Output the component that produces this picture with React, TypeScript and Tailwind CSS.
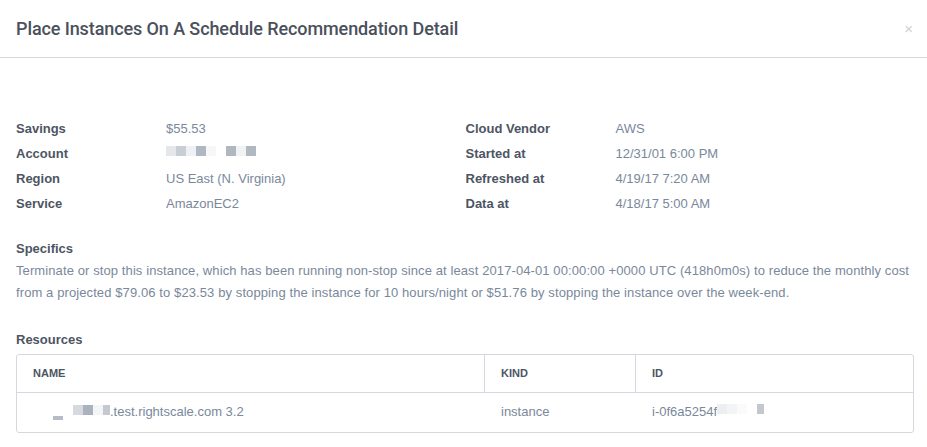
import React from 'react';

const font = { fontFamily: '"Liberation Sans", Arial, sans-serif' };

const Pixels: React.FC<{ colors: string[]; className?: string }> = ({ colors, className }) => (
  <div className={'flex ' + (className ?? '')}>
    {colors.map((c, i) => (
      <div key={i} className="h-[10px] w-[10px]" style={{ backgroundColor: c }} />
    ))}
  </div>
);

const Row: React.FC<{ label: string; children: React.ReactNode }> = ({ label, children }) => (
  <div className="flex h-[25px] items-center">
    <div className="w-[150px] text-[13px] font-bold text-[#4d5563]">{label}</div>
    <div className="text-[13px] text-[#7a889b]">{children}</div>
  </div>
);

export default function App() {
  return (
    <div className="h-[447px] w-[927px] overflow-hidden bg-white" style={font}>
      {/* Header */}
      <div className="flex h-[58px] items-center justify-between border-b border-[#d4d6db] pl-4 pr-[14px]">
        <h1
          className="text-[18px] font-medium tracking-[-0.1px] text-[#4a505c]"
          style={{ fontFamily: 'Roboto, "Liberation Sans", sans-serif' }}
        >
          Place Instances On A Schedule Recommendation Detail
        </h1>
        <span className="text-[15px] leading-none text-[#d0d0d0]">×</span>
      </div>

      {/* Body */}
      <div className="px-4 pt-[58px]">
        <div className="grid grid-cols-2">
          <div>
            <Row label="Savings">$55.53</Row>
            <Row label="Account">
              <Pixels
                className="mt-[-6px]"
                colors={['#e5e7eb', '#c9ced6', '#eff1f4', '#b0b8c4', '#f7f7f8', '#ffffff', '#b0b7c0', '#f1f2f4', '#b0b8c1']}
              />
            </Row>
            <Row label="Region">US East (N. Virginia)</Row>
            <Row label="Service">AmazonEC2</Row>
          </div>
          <div className="pl-[2px]">
            <Row label="Cloud Vendor">AWS</Row>
            <Row label="Started at">12/31/01 6:00 PM</Row>
            <Row label="Refreshed at">4/19/17 7:20 AM</Row>
            <Row label="Data at">4/18/17 5:00 AM</Row>
          </div>
        </div>

        <div className="mt-[23px]">
          <div className="text-[13px] font-bold text-[#4d5563]">Specifics</div>
          <p className="mt-[1px] text-[13px] leading-[22px] tracking-[0.1px] text-[#7a889b]">
            Terminate or stop this instance, which has been running non-stop since at least 2017-04-01 00:00:00 +0000 UTC
            (418h0m0s) to reduce the monthly cost from a projected $79.06 to $23.53 by stopping the instance for 10
            hours/night or $51.76 by stopping the instance over the week-end.
          </p>
        </div>

        <div className="mt-[26px]">
          <div className="text-[13px] font-bold text-[#4d5563]">Resources</div>
          <div className="mt-[5px] w-[898px] rounded-[3px] border border-[#d4d8de]">
            <div className="grid h-[38px] grid-cols-[468px_151px_1fr] border-b border-[#d4d8de] text-[11px] font-bold text-[#4d5563]">
              <div className="flex items-center border-r border-[#d4d8de] pl-4">NAME</div>
              <div className="flex items-center border-r border-[#d4d8de] pl-4">KIND</div>
              <div className="flex items-center pl-4">ID</div>
            </div>
            <div className="grid h-[39px] grid-cols-[468px_151px_1fr] text-[13px] text-[#7a889b]">
              <div className="flex items-center pl-[36px]">
                <div className="flex items-end">
                  <div className="h-[4px] w-[10px] bg-[#b5bcc6]" />
                  <div className="mb-[5px] flex">
                    <div className="h-[10px] w-[10px] bg-white" />
                    <div className="h-[10px] w-[10px] bg-[#d6dae0]" />
                    <div className="h-[10px] w-[10px] bg-[#aab2be]" />
                    <div className="h-[10px] w-[10px] bg-[#f4f5f7]" />
                    <div className="h-[10px] w-[7px] bg-[#c4c9d1]" />
                  </div>
                </div>
                <span className="-mt-[2px]">.test.rightscale.com 3.2</span>
              </div>
              <div className="flex items-center pl-4">
                <span className="-mt-[2px]">instance</span>
              </div>
              <div className="flex items-center pl-4">
                <span className="-mt-[2px]">i-0f6a5254f</span>
                <div className="-mt-[8px] flex">
                  <div className="h-[10px] w-[10px] bg-[#eceef1]" />
                  <div className="h-[10px] w-[10px] bg-[#f3f4f6]" />
                  <div className="h-[10px] w-[10px] bg-[#fafafa]" />
                  <div className="h-[10px] w-[10px] bg-white" />
                  <div className="h-[10px] w-[7px] bg-[#c3c8cf]" />
                </div>
              </div>
            </div>
          </div>
        </div>
      </div>
    </div>
  );
}
